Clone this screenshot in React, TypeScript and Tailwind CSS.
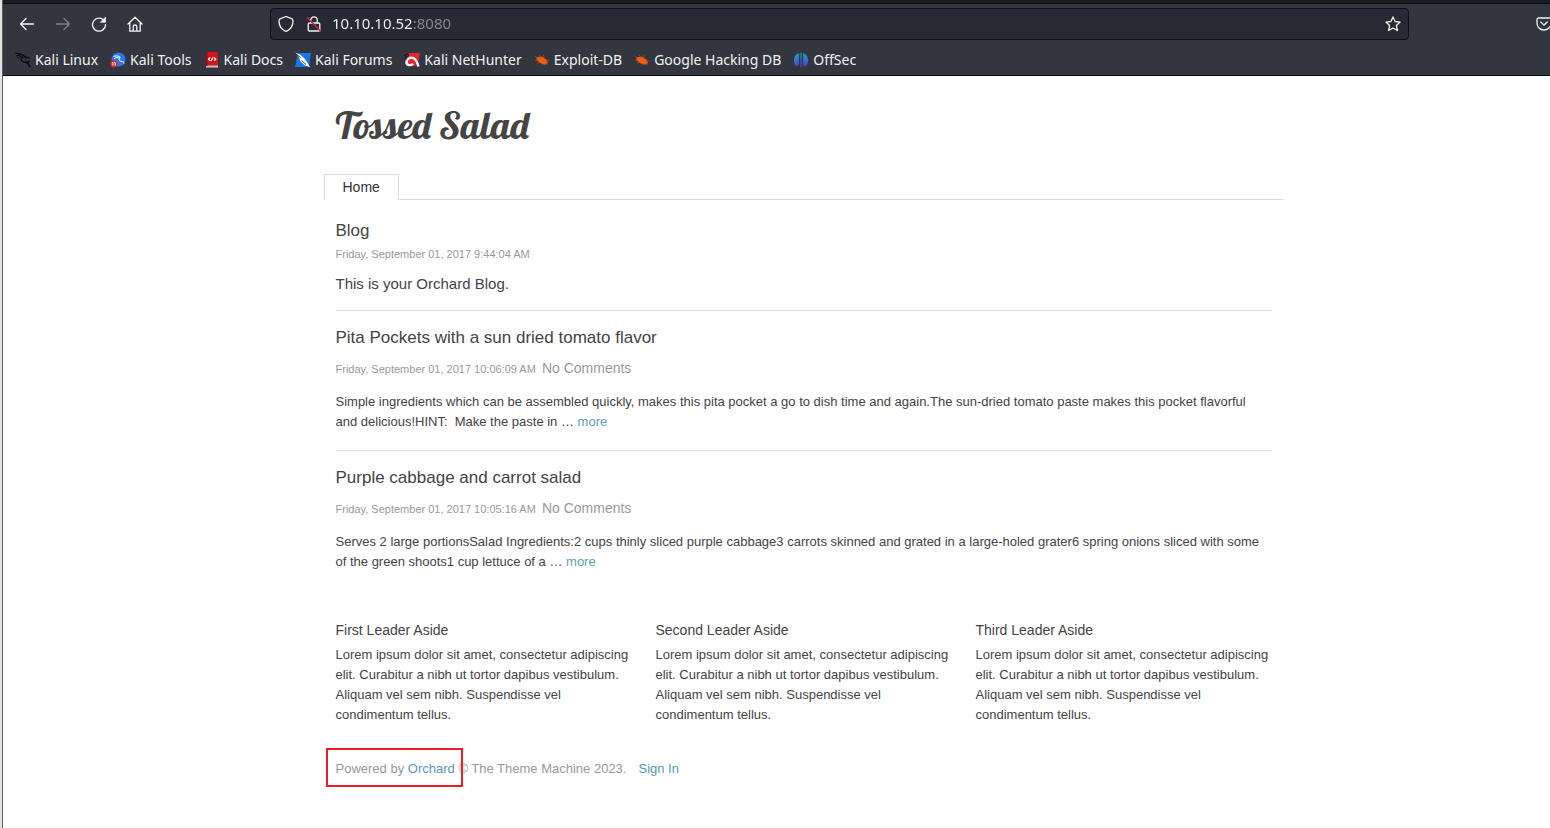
import type { ReactNode } from "react";

type Post = { title: string; date: string; text: string };

const posts: Post[] = [
  {
    title: "Pita Pockets with a sun dried tomato flavor",
    date: "Friday, September 01, 2017 10:06:09 AM",
    text: "Simple ingredients which can be assembled quickly, makes this pita pocket a go to dish time and again.The sun-dried tomato paste makes this pocket flavorful and delicious!HINT:\u00a0 Make the paste in \u2026",
  },
  {
    title: "Purple cabbage and carrot salad",
    date: "Friday, September 01, 2017 10:05:16 AM",
    text: "Serves 2 large portionsSalad Ingredients:2 cups thinly sliced purple cabbage3 carrots skinned and grated in a large-holed grater6 spring onions sliced with some of the green shoots1 cup lettuce of a \u2026",
  },
];

const asides = ["First Leader Aside", "Second Leader Aside", "Third Leader Aside"];

function Line({ children }: { children: ReactNode }) {
  return (
    <svg
      viewBox="0 0 16 16"
      className="size-4 shrink-0"
      fill="none"
      stroke="currentColor"
      strokeWidth="1.3"
      strokeLinecap="round"
      strokeLinejoin="round"
      aria-hidden="true"
    >
      {children}
    </svg>
  );
}

function Favicon({ children }: { children: ReactNode }) {
  return (
    <svg viewBox="0 0 16 16" className="size-4 shrink-0" fill="none" aria-hidden="true">
      {children}
    </svg>
  );
}

function ToolButton({ label, dim, children }: { label: string; dim?: boolean; children: ReactNode }) {
  return (
    <button
      type="button"
      aria-label={label}
      disabled={dim}
      className={
        dim
          ? "flex size-9 shrink-0 items-center justify-center text-[#7d7f84]"
          : "flex size-9 shrink-0 items-center justify-center text-[#f4f4f5]"
      }
    >
      {children}
    </button>
  );
}

const dragon = (
  <>
    <path d="M.5 1.200 5 2.200l3.600 1.300 2.200 2.300-1 .2" stroke="#08090b" strokeWidth="1.300" />
    <path d="M1 4l4-.8M2.200 6.400l4-2" stroke="#08090b" strokeWidth=".9" />
    <path d="M8.200 4.500C5.600 5.800 5.400 8.800 8 9.600c3 .9 6 .8 6.800 5.600" stroke="#08090b" strokeWidth="1.500" />
    <path d="M9 4.500l4 .8 1.500 1.500M11 10l4-.4" stroke="#08090b" strokeWidth="1.200" />
  </>
);

const bug = (
  <>
    <path d="M2.500 5.200 8 4.500l4.500 3.200 1.500 3.300-3 1.800-4.600-1.600L2.500 8Z" fill="#ee5d12" />
    <path
      d="M1 4.500l3 1.500M.8 8.500l3-.5M5 2.800l2 3M9.500 3l.6 3.200M12 9l3.500-.6M5.500 10l-2.500 1.500M9 12l-1 1.500M12.500 11l1.500 2"
      stroke="#a54a20"
      strokeWidth=".8"
    />
  </>
);

const bookmarks: { name: string; icon: ReactNode }[] = [
  { name: "Kali Linux", icon: dragon },
  {
    name: "Kali Tools",
    icon: (
      <>
        <circle cx="8.500" cy="7.500" r="7" fill="#2777ee" />
        <path
          d="M3.500 4.500c3-1.200 5.500-.6 7 1.300M4 6.800c2-1.300 4-1.500 5.500-.5-1 2 .5 3 2.500 3.200 1.200.2 2 1 2.200 2"
          stroke="#d5e5ff"
          strokeWidth="1.100"
        />
        <circle cx="3.800" cy="11.800" r="3.600" fill="#e0262d" />
        <path d="M2 10.500h1v3M4.200 10.500h1v3" stroke="#fff" strokeWidth=".9" />
      </>
    ),
  },
  {
    name: "Kali Docs",
    icon: (
      <>
        <path d="M2 0h12v15.500H2z" fill="#d3141b" />
        <path d="M2 13.500h12v2H2z" fill="#b9c5cd" />
        <path d="M2 0h1.500v14H2z" fill="#980d12" />
        <path
          d="M6.200 5.500 4.500 7.200l1.700 1.700M10 5.500l1.700 1.700L10 8.900M9 5.500 7.200 9"
          stroke="#fff"
          strokeWidth="1.200"
        />
      </>
    ),
  },
  {
    name: "Kali Forums",
    icon: (
      <>
        <path d="M3 1h13l-2 14H0Z" fill="#1976ea" />
        <path d="M0 .5l5 2 4.500 4 2.500 3.500 3 5-5-1.500-4.500-4L4 5Z" fill="#fff" />
        <path d="M0 1l5.500 4.500M6.500 8.500 11 12.500" stroke="#17191d" strokeWidth=".8" />
      </>
    ),
  },
  {
    name: "Kali NetHunter",
    icon: (
      <>
        <path d="M4 1h12l-2.500 13H2Z" fill="#e5252d" />
        <path
          d="M14.500 14.500C13 8.500 10 4.800 6.200 5.800 1.800 7 1.200 12 4.800 13c2 .5 3.200-.3 4.200-1.200"
          stroke="#fff"
          strokeWidth="2.400"
        />
        <path d="M0 3.500l5-1.500M.5 6 5 3.500M1 8.500 3 6.500" stroke="#111216" strokeWidth="1" />
      </>
    ),
  },
  { name: "Exploit-DB", icon: bug },
  { name: "Google Hacking DB", icon: bug },
  {
    name: "OffSec",
    icon: (
      <>
        <defs>
          <linearGradient id="offsec" gradientUnits="userSpaceOnUse" x1="0" y1="0" x2="0" y2="16">
            <stop offset="0" stopColor="#10b3c4" />
            <stop offset=".5" stopColor="#3473d3" />
            <stop offset="1" stopColor="#6423d5" />
          </linearGradient>
        </defs>
        <path
          d="M7.400.800h1.200v14.400H7.400zM5.800 1.200v11.500L4 14.500C-.8 12 .2 2.500 5.800 1.200ZM10.200 1.200c5.600 1.300 6.600 10.800 1.800 13.300l-1.800-1.800Z"
          fill="url(#offsec)"
        />
      </>
    ),
  },
];

function BrowserChrome() {
  return (
    <header className="border-b border-[#09090d] bg-[#33363e] font-['Noto_Sans',sans-serif] text-sm text-[#f2f2f3]">
      <div className="h-1 border-b border-[#0d0e11] bg-[#1b1c21]" />
      <div className="flex h-10 items-center pl-1.5">
        <nav aria-label="Browser navigation" className="mr-[117px] flex">
          <ToolButton label="Back">
            <Line>
              <path d="M14.500 8H1.500M7 2.500 1.500 8 7 13.500" />
            </Line>
          </ToolButton>
          <ToolButton label="Forward" dim>
            <Line>
              <path d="M1.500 8h13M9 2.500 14.500 8 9 13.500" />
            </Line>
          </ToolButton>
          <ToolButton label="Reload">
            <Line>
              <path d="M13.500 5.200A6.500 6.500 0 1 0 14.500 8.500" />
              <path d="M14.500 1.500v4.700H9.800Z" fill="currentColor" strokeWidth=".8" />
            </Line>
          </ToolButton>
          <ToolButton label="Home">
            <Line>
              <path d="M1 8 8 1.200 15 8M2.800 6.800v8.400h10.400V6.800M6.200 15v-4.200c0-1.200.6-1.800 1.800-1.800s1.800.6 1.800 1.800V15" />
            </Line>
          </ToolButton>
        </nav>
        <form
          className="flex h-8 min-w-0 flex-1 items-center rounded border border-[#0d0e13] bg-[#272934] px-[7px]"
          onSubmit={(e) => e.preventDefault()}
        >
          <span className="mr-2.5 flex gap-3">
            <Line>
              <path d="M8 .5 14 2.800c1 .4 1 1.200 1 2.200 0 5-2.500 8.500-7 10.500C3.500 13.500 1 10 1 5c0-1 0-1.800 1-2.200Z" />
            </Line>
            <Line>
              <path d="M4.800 7V4a3.200 3.200 0 0 1 6.400 0v3M3.500 7h9c.9 0 1.300.5 1.300 1.300v5.400c0 .8-.4 1.300-1.300 1.300h-9c-.9 0-1.300-.5-1.300-1.300V8.300C2.200 7.500 2.600 7 3.500 7Z" />
              <path d="M1.500 2 14.500 15" stroke="#e0204e" strokeWidth="1.500" />
            </Line>
          </span>
          <input
            aria-label="Address"
            defaultValue="10.10.10.52:8080"
            className="min-w-0 flex-1 bg-linear-to-r from-[#fbfbfe] from-[80px] to-[#888a91] to-[80px] bg-clip-text text-[15px] text-transparent caret-white outline-none"
          />
          <button type="button" aria-label="Bookmark this page">
            <Line>
              <path d="m8 .9 2.100 4.600 5 .6-3.700 3.400 1 5-4.400-2.500-4.400 2.500 1-5L.9 6.100l5-.6Z" />
            </Line>
          </button>
        </form>
        <div className="-mr-3 flex w-[153px] shrink-0 justify-end">
          <ToolButton label="Save to Pocket">
            <Line>
              <path d="M2.500 2h11c.9 0 1.500.6 1.500 1.500V7c0 4-3 7-7 7S1 11 1 7V3.500C1 2.600 1.600 2 2.500 2ZM4.800 6 8 9l3.200-3" />
            </Line>
          </ToolButton>
        </div>
      </div>
      <nav aria-label="Bookmarks" className="flex items-center gap-3 pt-1.5 pb-[5px] pl-3 leading-5 whitespace-nowrap">
        {bookmarks.map((b) => (
          <a key={b.name} href="#" className="flex items-center gap-1">
            <Favicon>{b.icon}</Favicon>
            {b.name}
          </a>
        ))}
      </nav>
    </header>
  );
}

export default function App() {
  return (
    <div className="min-h-screen overflow-hidden border-l-2 border-[#e4e4e4] bg-white">
      <div className="min-h-screen border-l border-[#5c5c5c]">
        <BrowserChrome />
        <div className="pb-10 pl-[54px] font-['Liberation_Sans',Arial,sans-serif] text-[13px] leading-5 text-[#444]">
          <div className="mx-auto max-w-[960px]">
            <h1 className="px-3 pt-[25px] pb-[25px] font-['Lobster','Liberation_Serif',serif] text-[38px] leading-[48px] font-normal">
              Tossed Salad
            </h1>
            <nav aria-label="Main" className="flex border-b border-[#dbdbdb]">
              <a
                href="#"
                className="-mb-px border border-b-0 border-[#dbdbdb] bg-white px-[18px] pb-px text-sm leading-6 text-[#333]"
              >
                Home
              </a>
            </nav>
            <main className="px-3 pt-[19px]">
              <h2 className="text-[17px] leading-6">Blog</h2>
              <p className="mt-px text-[11px] leading-5 text-[#999]">Friday, September 01, 2017 9:44:04 AM</p>
              <p className="mt-2 mb-3.5 text-[15px] leading-6">This is your Orchard Blog.</p>
              {posts.map((p) => (
                <article key={p.title} className="mb-[18px] border-t border-[#dbdbdb] pt-[15px]">
                  <h2 className="text-[17px] leading-6">{p.title}</h2>
                  <div className="mt-2 flex items-baseline gap-1.5 leading-5 text-[#999]">
                    <span className="text-[11px]">{p.date}</span>
                    <span className="text-sm leading-5">No Comments</span>
                  </div>
                  <p className="mt-[13px] pr-2">
                    {p.text}{" "}
                    <a href="#" className="text-[#5f9fb7]">
                      more
                    </a>
                  </p>
                </article>
              ))}
            </main>
            <section className="grid grid-cols-3 pt-[30px]">
              {asides.map((title) => (
                <aside key={title} className="px-3">
                  <h3 className="mb-[5px] text-sm leading-5">{title}</h3>
                  <p>
                    Lorem ipsum dolor sit amet, consectetur adipiscing elit. Curabitur a nibh ut tortor dapibus
                    vestibulum. Aliquam vel sem nibh. Suspendisse vel condimentum tellus.
                  </p>
                </aside>
              ))}
            </section>
            <footer className="flex gap-3 px-3 pt-[34px] text-[#999]">
              <p>
                <span className="relative inline-block">
                  Powered by{" "}
                  <a href="#" className="text-[#5797b7]">
                    Orchard
                  </a>
                  <span className="pointer-events-none absolute -top-[11px] -right-2 -bottom-2 -left-2.5 border-2 border-[#ed1c24]" />
                </span>{" "}
                © The Theme Machine 2023.
              </p>
              <a href="#" className="text-[#5797b7]">
                Sign In
              </a>
            </footer>
          </div>
        </div>
      </div>
    </div>
  );
}
